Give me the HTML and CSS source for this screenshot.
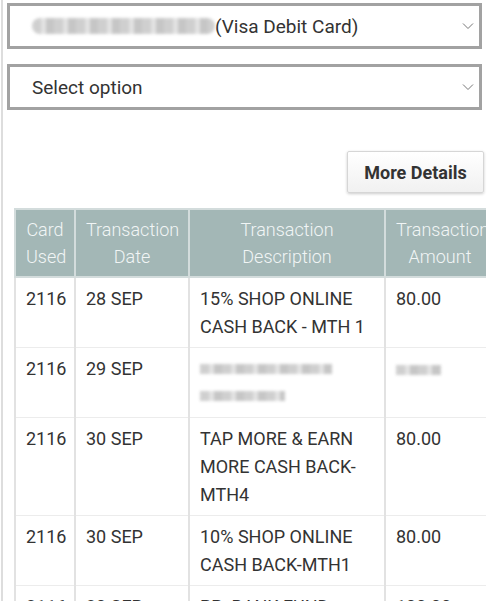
FILE: index.html
```html
<!DOCTYPE html>
<html lang="en">
  <head>
    <meta charset="UTF-8" />
    <meta name="viewport" content="width=device-width, initial-scale=1.0" />
    <title>Card Transactions</title>
    <link rel="stylesheet" href="styles.css">
  </head>
  <body>
    <div class="page">
      <div class="select">
        <span class="select-value"><span class="blur blur-card"></span>(Visa Debit Card)</span>
        <svg class="chevron" width="12" height="8" viewBox="0 0 12 8"><path d="M1 1.5 L6 6.5 L11 1.5" fill="none" stroke="#777" stroke-width="1"/></svg>
      </div>
      <div class="select">
        <span class="select-value">Select option</span>
        <svg class="chevron" width="12" height="8" viewBox="0 0 12 8"><path d="M1 1.5 L6 6.5 L11 1.5" fill="none" stroke="#777" stroke-width="1"/></svg>
      </div>

      <div class="actions">
        <button class="btn">More Details</button>
      </div>

      <div class="table-wrap">
        <table class="tx">
          <colgroup>
            <col class="c1">
            <col class="c2">
            <col class="c3">
            <col class="c4">
          </colgroup>
          <thead>
            <tr>
              <th>Card Used</th>
              <th>Transaction Date</th>
              <th>Transaction Description</th>
              <th>Transaction Amount</th>
            </tr>
          </thead>
          <tbody>
            <tr>
              <td>2116</td>
              <td>28 SEP</td>
              <td>15% SHOP ONLINE CASH BACK - MTH 1</td>
              <td>80.00</td>
            </tr>
            <tr>
              <td>2116</td>
              <td>29 SEP</td>
              <td><span class="blur blur-line1"></span><span class="blur blur-line2"></span></td>
              <td><span class="blur blur-amt"></span></td>
            </tr>
            <tr>
              <td>2116</td>
              <td>30 SEP</td>
              <td>TAP MORE &amp; EARN MORE CASH BACK-MTH4</td>
              <td>80.00</td>
            </tr>
            <tr>
              <td>2116</td>
              <td>30 SEP</td>
              <td>10% SHOP ONLINE CASH BACK-MTH1</td>
              <td>80.00</td>
            </tr>
            <tr>
              <td>2116</td>
              <td>30 SEP</td>
              <td>PP: BANK FUND TRANSFER</td>
              <td>100.00</td>
            </tr>
          </tbody>
        </table>
      </div>
    </div>
  </body>
</html>
```

FILE: styles.css
```css
body {
  margin: 0;
  background: #fff;
  color: #333;
  font-family: Roboto, "Liberation Sans", Arial, sans-serif;
  overflow: hidden;
}

.page {
  border-left: 2px solid #ddd;
  margin-left: 1px;
  height: 601px;
  box-sizing: border-box;
  padding: 3px 18px 0 4px;
}

.select {
  display: flex;
  align-items: center;
  justify-content: space-between;
  height: 46px;
  box-sizing: border-box;
  border: 3px solid #a2a2a2;
  padding: 0 5px 0 22px;
  margin-bottom: 15px;
  font-size: 19px;
  color: #333;
}

.select-value {
  display: flex;
  align-items: center;
}

.blur {
  display: inline-block;
  background: repeating-linear-gradient(90deg, #c4c4c4 0 9px, #dcdcdc 9px 14px, #b9b9b9 14px 22px);
  filter: blur(1.5px);
  opacity: 0.8;
}

.blur-card {
  width: 183px;
  height: 16px;
  border-radius: 8px;
}

.blur-line1 {
  display: block;
  width: 132px;
  height: 10px;
  margin: 9px 0 17px;
}

.blur-line2 {
  display: block;
  width: 85px;
  height: 10px;
  margin-bottom: 10px;
}

.blur-amt {
  width: 45px;
  height: 10px;
  margin-top: 9px;
}

.actions {
  display: flex;
  justify-content: flex-end;
  padding-top: 26px;
  margin-right: -2px;
}

.btn {
  font-family: inherit;
  font-size: 18px;
  font-weight: bold;
  color: #333;
  background: linear-gradient(#fff, #f1f1f1);
  border: 1px solid #d6d6d6;
  box-shadow: 0 1px 3px rgba(0, 0, 0, 0.2);
  border-radius: 2px;
  width: 137px;
  height: 42px;
  padding: 0;
}

.table-wrap {
  margin: 15px 0 0 7px;
  overflow: hidden;
  width: 472px;
}

.tx {
  border-collapse: collapse;
  table-layout: fixed;
  width: 480px;
  font-size: 18px;
}

.c1 { width: 60px; }
.c2 { width: 114px; }
.c3 { width: 196px; }
.c4 { width: 110px; }

.tx th {
  background: #a3b7b6;
  color: #f1f5f5;
  font-weight: 300;
  line-height: 27px;
  padding: 6px 10px;
  border: 2px solid #d3dcdc;
  text-align: center;
}

.tx td {
  vertical-align: top;
  line-height: 28px;
  padding: 7px 8px 6px 10px;
  border-left: 2px solid #e2e2e2;
  border-right: 2px solid #e2e2e2;
  border-bottom: 1px solid #ececec;
}
```
